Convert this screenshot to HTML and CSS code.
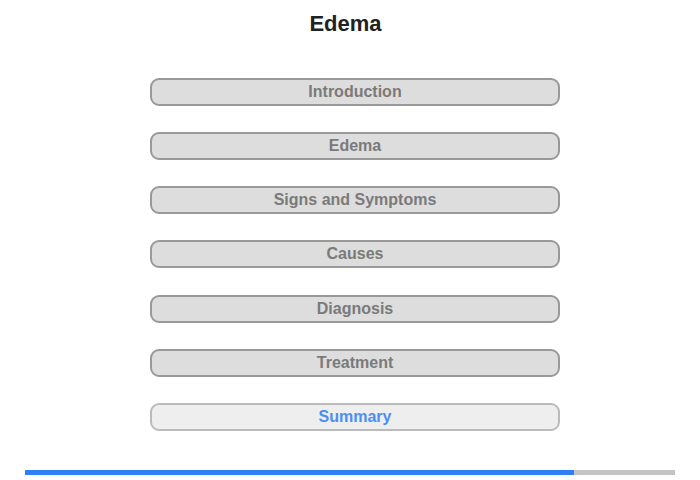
FILE: index.html
```html
<!DOCTYPE html>
<html lang="en">
<head>
    <meta charset="UTF-8">
    <title>Edema</title>
    <link rel="stylesheet" href="styles.css">
</head>
<body>

<div id="page">
    <h1 id="title">Edema</h1>

    <div id="menu">
        <button class="menu-item">Introduction</button>
        <button class="menu-item">Edema</button>
        <button class="menu-item">Signs and Symptoms</button>
        <button class="menu-item">Causes</button>
        <button class="menu-item">Diagnosis</button>
        <button class="menu-item">Treatment</button>
        <button class="menu-item current">Summary</button>
    </div>

    <div id="progress">
        <div id="progress-fill" style="width: 84.5%"></div>
    </div>
</div>

</body>
</html>
```

FILE: styles.css
```css
body {
    font-family: 'Liberation Sans', Arial, sans-serif;
    margin: 0;
    background-color: #ffffff;
}
#page {
    width: 700px;
    height: 480px;
    display: flex;
    flex-direction: column;
}
#title {
    margin: 11px 0 0;
    padding-right: 9px;
    font-size: 22px;
    line-height: 25px;
    font-weight: bold;
    text-align: center;
    color: #222;
}
#menu {
    display: flex;
    flex-direction: column;
    gap: 26.17px;
    width: 410px;
    margin: 42px 0 0 150px;
}
.menu-item {
    box-sizing: border-box;
    height: 28px;
    padding: 0;
    border: 2px solid #999;
    border-radius: 9px;
    background-color: #ddd;
    color: #7a7a7a;
    font-family: inherit;
    font-size: 16px;
    font-weight: bold;
    text-align: center;
    cursor: pointer;
}
.menu-item.current {
    border-color: #bbb;
    background-color: #eee;
    color: #4a8ef7;
}
#progress {
    margin: 39px 0 0 25px;
    width: 650px;
    height: 5px;
    background-color: #c4c4c4;
}
#progress-fill {
    height: 100%;
    background-color: #2f80f5;
}
```
